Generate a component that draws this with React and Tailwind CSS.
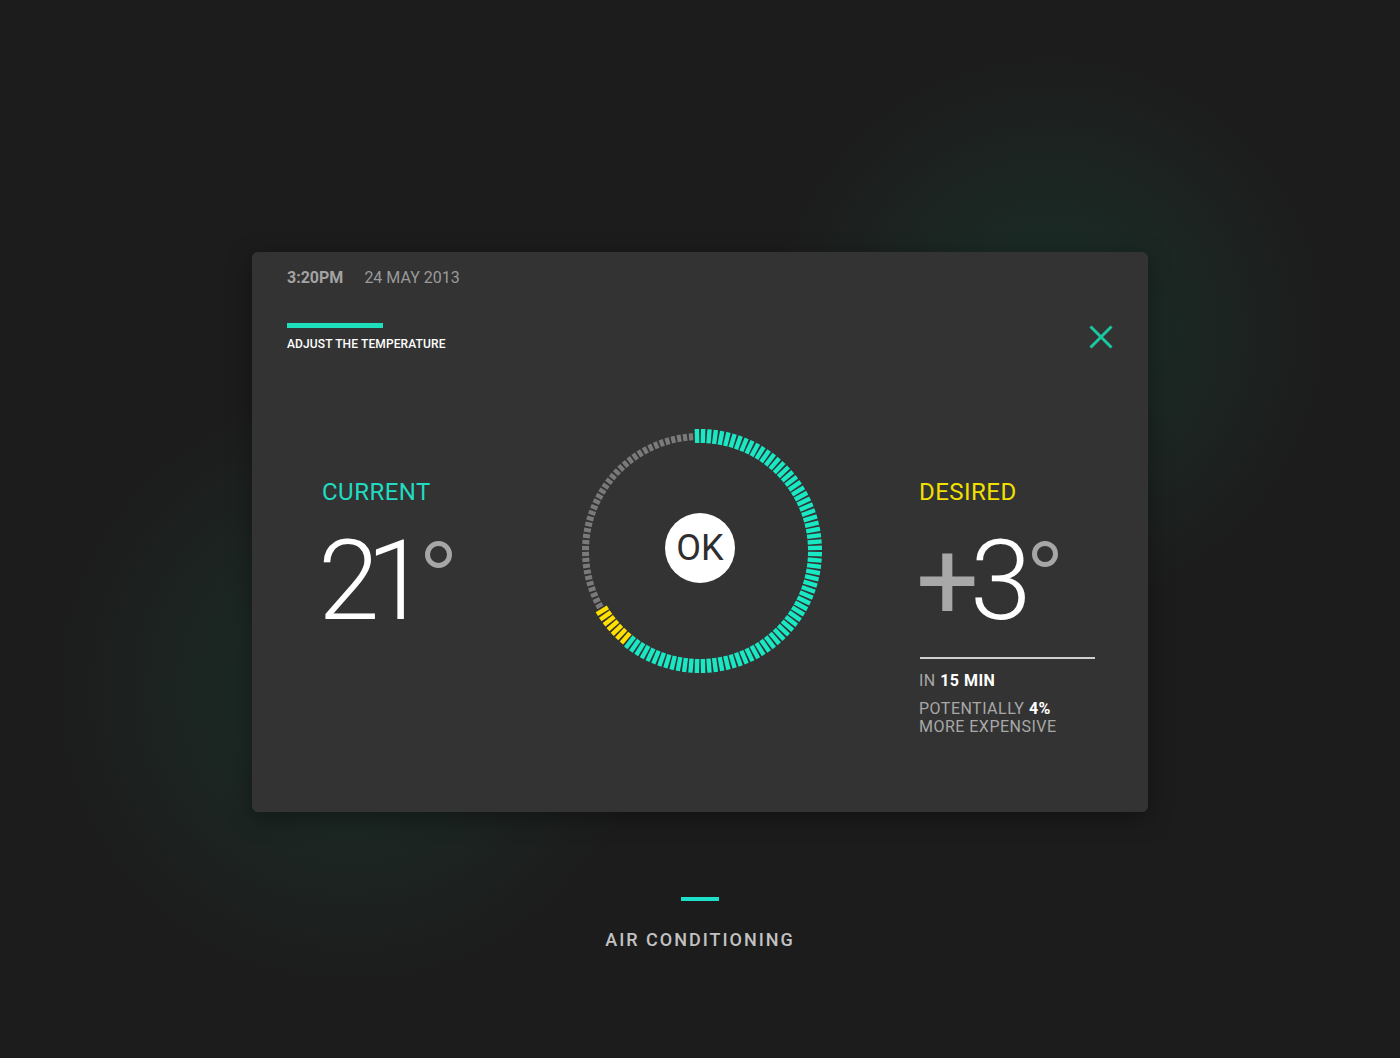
import React from "react";

const CYAN = "#19e8c4";
const YELLOW = "#ffe000";
const GRAY = "#7a7a7a";

function Ring() {
  const ticks = [];
  const N = 120;
  for (let i = 0; i < N; i++) {
    const angle = i * 3 - 1.5;
    let color, r1, r2, w;
    if (i <= 73) {
      color = CYAN; r1 = 108; r2 = 122; w = 4.4;
    } else if (i <= 80) {
      color = YELLOW; r1 = 108; r2 = 121; w = 4.4;
    } else {
      color = GRAY; r1 = 111; r2 = 118; w = 4.2;
    }
    ticks.push(
      <rect
        key={i}
        x={-w / 2}
        y={-r2}
        width={w}
        height={r2 - r1}
        fill={color}
        transform={`rotate(${angle})`}
      />
    );
  }
  return (
    <svg width="250" height="250" viewBox="-125 -125 250 250" className="block">
      {ticks}
    </svg>
  );
}

export default function App() {
  return (
    <div
      className="w-full h-[1058px] flex flex-col items-center bg-[#1c1c1c] bg-[radial-gradient(circle_at_1050px_330px,#1a3029_0px,#1c2421_170px,transparent_280px),radial-gradient(circle_at_350px_690px,#1a2e28_0px,#1c2320_190px,transparent_300px)]"
      style={{ fontFamily: "Roboto, 'Noto Sans', sans-serif" }}
    >
      <div className="mt-[252px] w-[896px] h-[560px] rounded-[6px] bg-[#333333] shadow-[0_6px_24px_rgba(0,0,0,0.35)] flex flex-col">
        {/* header */}
        <div className="px-[35px] pt-[18px]">
          <div className="flex items-center text-[16px] leading-[16px] text-[#a3a3a3]">
            <span className="font-bold">3:20PM</span>
            <span className="ml-[21px] font-normal text-[#9a9a9a]">24 MAY 2013</span>
          </div>
          <div className="mt-[37px] flex justify-between items-start">
            <div>
              <div className="w-[96px] h-[5px] bg-[#1de0bb]" />
              <div className="mt-[10px] text-[12px] leading-[12px] font-medium text-white tracking-[0.01em]">
                ADJUST THE TEMPERATURE
              </div>
            </div>
            <svg width="24" height="24" viewBox="0 0 24 24" className="mt-[2px]">
              <line x1="1.5" y1="1.5" x2="22.5" y2="22.5" stroke="#1bc7a0" strokeWidth="3" />
              <line x1="22.5" y1="1.5" x2="1.5" y2="22.5" stroke="#1bc7a0" strokeWidth="3" />
            </svg>
          </div>
        </div>

        {/* main row */}
        <div className="mt-[76px] flex items-start">
          <div className="w-[323px] pl-[70px] pt-[54px]">
            <div className="text-[24px] leading-[24px] tracking-[0.02em]" style={{ color: "#20dcc0" }}>
              CURRENT
            </div>
            <div className="mt-[22px] flex items-start">
              <span className="-ml-[4px] text-[111px] leading-[111px] font-light text-white tracking-[-0.12em]">21</span>
              <span className="ml-[10px] mt-[15px] w-[27px] h-[27px] rounded-full border-[5px] border-[#a6a6a6]" />
            </div>
          </div>

          <div className="relative w-[250px] h-[250px] flex items-center justify-center">
            <div className="absolute inset-0">
              <Ring />
            </div>
            <div className="relative -mt-[6px] w-[70px] h-[70px] rounded-full bg-white flex items-center justify-center">
              <span className="text-[36px] leading-[36px] text-[#2e2e2e] font-normal">OK</span>
            </div>
          </div>

          <div className="pl-[94px] pt-[54px]">
            <div className="text-[24px] leading-[24px] tracking-[0.02em]" style={{ color: "#f2e000" }}>
              DESIRED
            </div>
            <div className="mt-[22px] flex items-start">
              <span className="-ml-[3px] text-[111px] leading-[111px] font-light tracking-[-0.08em]">
                <span className="text-[#a8a8a8] font-normal">+</span>
                <span className="text-white">3</span>
              </span>
              <span className="ml-[9px] mt-[15px] w-[26px] h-[26px] rounded-full border-[5px] border-[#a6a6a6]" />
            </div>
            <div className="mt-[20px] ml-[1px] w-[175px] h-[2px] bg-[#d0d0d0]" />
            <div className="mt-[13px] text-[16px] leading-[18px] text-[#a8a8a8] tracking-[0.03em]">
              IN <span className="text-white font-bold">15 MIN</span>
            </div>
            <div className="mt-[10px] text-[16px] leading-[18px] text-[#a8a8a8] tracking-[0.03em]">
              POTENTIALLY <span className="text-white font-bold">4%</span>
              <br />
              MORE EXPENSIVE
            </div>
          </div>
        </div>
      </div>

      <div className="mt-[85px] w-[38px] h-[4px] bg-[#1de0c8]" />
      <div className="mt-[29px] text-[18px] leading-[19px] tracking-[0.11em] text-[#c2c2c2] font-medium">
        AIR CONDITIONING
      </div>
    </div>
  );
}
